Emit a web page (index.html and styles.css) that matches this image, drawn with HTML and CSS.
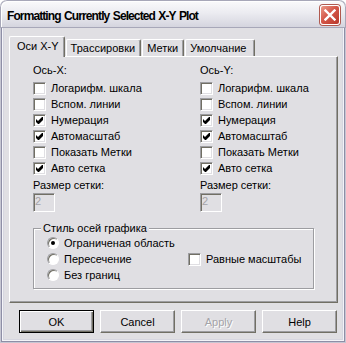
FILE: index.html
```html
<!DOCTYPE html>
<html lang="ru">
<head>
  <meta charset="UTF-8">
  <title>Formatting Currently Selected X-Y Plot</title>
  <link rel="stylesheet" href="styles.css">
</head>
<body>

<div class="window">
  <div class="titlebar">
    <span class="title">Formatting Currently Selected X-Y Plot</span>
    <span class="close">
      <svg width="12" height="12" viewBox="0 0 12 12"><path d="M1.5 1.5l9 9M10.5 1.5l-9 9" stroke="#fff" stroke-width="2.4" stroke-linecap="square"/></svg>
    </span>
  </div>

  <div class="content">
    <div class="tabs">
      <span class="tab active">Оси X-Y</span>
      <span class="tab">Трассировки</span>
      <span class="tab">Метки</span>
      <span class="tab last">Умолчание</span>
    </div>

    <div class="panel">
      <div class="axes">
        <!-- X axis -->
        <div class="axis">
          <div class="label">Ось-X:</div>
          <div class="check"><span class="box"></span>Логарифм. шкала</div>
          <div class="check"><span class="box"></span>Вспом. линии</div>
          <div class="check"><span class="box"><svg width="7" height="7" viewBox="0 0 7 7"><path d="M0 2L2 4L6 0H7V3L3 7H2L0 5Z"/></svg></span>Нумерация</div>
          <div class="check"><span class="box"><svg width="7" height="7" viewBox="0 0 7 7"><path d="M0 2L2 4L6 0H7V3L3 7H2L0 5Z"/></svg></span>Автомасштаб</div>
          <div class="check"><span class="box"></span>Показать Метки</div>
          <div class="check"><span class="box"><svg width="7" height="7" viewBox="0 0 7 7"><path d="M0 2L2 4L6 0H7V3L3 7H2L0 5Z"/></svg></span>Авто сетка</div>
          <div class="label size">Размер сетки:</div>
          <div class="edit">2</div>
        </div>
        <!-- Y axis -->
        <div class="axis">
          <div class="label">Ось-Y:</div>
          <div class="check"><span class="box"></span>Логарифм. шкала</div>
          <div class="check"><span class="box"></span>Вспом. линии</div>
          <div class="check"><span class="box"><svg width="7" height="7" viewBox="0 0 7 7"><path d="M0 2L2 4L6 0H7V3L3 7H2L0 5Z"/></svg></span>Нумерация</div>
          <div class="check"><span class="box"><svg width="7" height="7" viewBox="0 0 7 7"><path d="M0 2L2 4L6 0H7V3L3 7H2L0 5Z"/></svg></span>Автомасштаб</div>
          <div class="check"><span class="box"></span>Показать Метки</div>
          <div class="check"><span class="box"><svg width="7" height="7" viewBox="0 0 7 7"><path d="M0 2L2 4L6 0H7V3L3 7H2L0 5Z"/></svg></span>Авто сетка</div>
          <div class="label size">Размер сетки:</div>
          <div class="edit">2</div>
        </div>
      </div>

      <div class="group-wrap">
        <fieldset class="group">
          <legend>Стиль осей графика</legend>
          <div class="styles">
            <div class="radio"><span class="dot on"></span>Ограниченая область</div>
            <div></div>
            <div class="radio"><span class="dot"></span>Пересечение</div>
            <div class="check"><span class="box"></span>Равные масштабы</div>
            <div class="radio"><span class="dot"></span>Без границ</div>
          </div>
        </fieldset>
      </div>
    </div>

    <div class="buttons">
      <button class="btn default">OK</button>
      <button class="btn">Cancel</button>
      <button class="btn disabled">Apply</button>
      <button class="btn">Help</button>
    </div>
  </div>
</div>

</body>
</html>
```

FILE: styles.css
```css
body {
  margin: 0;
  font-family: "Liberation Sans", Arial, sans-serif;
  font-size: 11px;
  color: #000;
}
.window {
  width: 346px;
  height: 343px;
  box-sizing: border-box;
  background: #e0dfe3;
  border-radius: 7px 7px 0 0;
  overflow: hidden;
  box-shadow: inset 0 0 0 1px #c6c6d2, inset 0 0 0 2px #8e8ea6, inset 0 0 0 3px #f4f4f8, inset 0 0 0 4px #d6d6e0;
}
.titlebar {
  height: 28px;
  box-sizing: border-box;
  display: flex;
  justify-content: space-between;
  align-items: flex-start;
  padding: 5px 6px 0 7px;
  background: linear-gradient(#fbfbfc, #ececf1 45%, #d3d3dd);
  border-radius: 7px 7px 0 0;
  box-shadow: inset 0 0 0 1px #a7a7b8, inset 1px 1px 0 1px #fff;
}
.title {
  font-weight: bold;
  font-size: 12px;
  letter-spacing: -0.9px;
  word-spacing: 1px;
  line-height: 15px;
  margin-top: 4px;
}
.close {
  width: 20px;
  height: 20px;
  box-sizing: border-box;
  display: flex;
  align-items: center;
  justify-content: center;
  border: 1px solid #fff;
  border-radius: 3px;
  background: linear-gradient(135deg, #ea9a89, #d4584a 45%, #b9382b);
  box-shadow: 0 0 0 1px #b05a50;
}
.content {
  padding: 8px 8px 0 9px;
}
.tabs {
  display: flex;
  align-items: flex-end;
  height: 20px;
  position: relative;
  z-index: 1;
}
.tab {
  height: 17px;
  box-sizing: border-box;
  margin-right: 1px;
  padding: 0 5px 0 4px;
  line-height: 16px;
  border-top: 1px solid #fff;
  border-left: 1px solid #fff;
  border-right: 1px solid #716f64;
  border-radius: 2px 2px 0 0;
  box-shadow: inset -1px 0 #9d9da1;
  white-space: nowrap;
}
.tab.last {
  padding-right: 8px;
}
.tab.active {
  height: 21px;
  margin-bottom: -1px;
  padding: 1px 5px 0 7px;
  background: #e0dfe3;
}
.panel {
  height: 247px;
  box-sizing: border-box;
  border: 1px solid;
  border-color: #fff #716f64 #716f64 #fff;
  box-shadow: inset -1px -1px #9d9da1;
}
.axes {
  display: flex;
  padding: 5px 0 0 23px;
}
.axis {
  flex: none;
  width: 167px;
}
.axis + .axis {
  width: 120px;
}
.label {
  line-height: 16px;
  margin-bottom: 2px;
}
.label.size {
  margin: 2px 0 0;
  line-height: 15px;
}
.check, .radio {
  display: flex;
  align-items: flex-start;
  height: 16px;
  line-height: 16px;
  white-space: nowrap;
}
.box {
  width: 13px;
  height: 13px;
  box-sizing: border-box;
  margin: 2px 5px 0 0;
  padding: 2px;
  background: #fff;
  border: 1px solid;
  border-color: #9d9da1 #fff #fff #9d9da1;
  box-shadow: inset 1px 1px #716f64, inset -1px -1px #e0dfe3;
}
.box svg {
  display: block;
}
.edit {
  width: 22px;
  height: 19px;
  box-sizing: border-box;
  padding-left: 1px;
  line-height: 15px;
  color: #a4a3a8;
  background: #e0dfe3;
  border: 1px solid;
  border-color: #9d9da1 #fff #fff #9d9da1;
  box-shadow: inset 1px 1px #716f64, inset -1px -1px #e0dfe3;
}
.group-wrap {
  padding: 0 23px;
}
.group {
  margin: 10px 0 0;
  padding: 0 0 5px 13px;
  border: 1px solid #9d9da1;
  box-shadow: 1px 1px #fff, inset 1px 1px #fff;
}
.group legend {
  margin-left: -6px;
  padding: 0 2px;
  line-height: 13px;
  background: #e0dfe3;
}
.styles {
  display: grid;
  grid-template-columns: 141px 1fr;
}
.dot {
  position: relative;
  width: 12px;
  height: 12px;
  box-sizing: border-box;
  margin: 2px 5px 0 0;
  border-radius: 50%;
  background: #fff;
  border: 1px solid;
  border-color: #9d9da1 #fff #fff #9d9da1;
  box-shadow: inset 1px 1px #716f64;
}
.dot.on::after {
  content: "";
  position: absolute;
  left: 3px;
  top: 3px;
  width: 4px;
  height: 4px;
  border-radius: 50%;
  background: #000;
}
.buttons {
  display: flex;
  gap: 6px;
  padding: 7px 0 0 10px;
}
.btn {
  width: 75px;
  height: 23px;
  box-sizing: border-box;
  padding: 0;
  font: inherit;
  line-height: 20px;
  color: #000;
  background: #e0dfe3;
  border: 1px solid;
  border-color: #fff #716f64 #716f64 #fff;
  border-radius: 0;
  box-shadow: inset -1px -1px #9d9da1;
}
.btn.default {
  border-color: #000;
  box-shadow: inset 1px 1px #fff, inset -1px -1px #716f64, inset -2px -2px #9d9da1;
}
.btn.disabled {
  color: #a4a3a8;
  text-shadow: 1px 1px #fff;
}
```
